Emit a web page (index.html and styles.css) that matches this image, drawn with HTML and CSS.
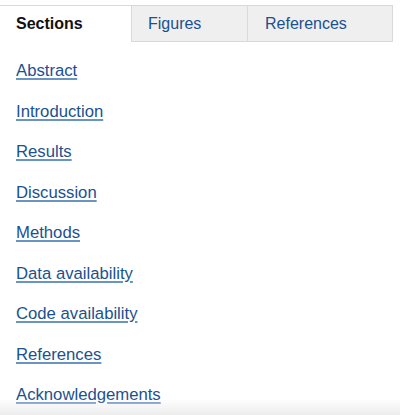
FILE: index.html
```html
<!DOCTYPE html>
<html>
<head>
<meta charset="utf-8">
<link rel="stylesheet" href="styles.css">
</head>
<body>
<div class="panel">
  <div class="tabs">
    <div class="tab active">Sections</div>
    <div class="tab">Figures</div>
    <div class="tab last">References</div>
  </div>
  <ul class="links">
    <li><a href="#">Abstract</a></li>
    <li><a href="#">Introduction</a></li>
    <li><a href="#">Results</a></li>
    <li><a href="#">Discussion</a></li>
    <li><a href="#">Methods</a></li>
    <li><a href="#">Data availability</a></li>
    <li><a href="#">Code availability</a></li>
    <li><a href="#">References</a></li>
    <li><a href="#">Acknowledgements</a></li>
  </ul>
</div>
<div class="fade"></div>
</body>
</html>
```
FILE: styles.css
```css
html, body {
  margin: 0;
  padding: 0;
  background: #fff;
  font-family: "Liberation Sans", Arial, sans-serif;
  font-size: 16px;
  overflow: hidden;
}
.panel {
  padding-top: 5px;
}
.tabs {
  display: flex;
  width: 393px;
}
.tab {
  box-sizing: border-box;
  height: 37px;
  line-height: 36px;
  padding: 0 0 0 16px;
  color: #1b5190;
  background: #efefef;
  border-top: 1px solid #d9d9d9;
  border-bottom: 1px solid #d9d9d9;
  border-left: 1px solid #d9d9d9;
  overflow: hidden;
}
.tab.active {
  width: 131px;
  background: #fff;
  color: #111;
  font-weight: bold;
  border-left: none;
  border-bottom: none;
}
.tab:nth-child(2) {
  width: 116px;
}
.tab.last {
  flex: 1;
  padding-left: 17px;
  border-right: 1px solid #d9d9d9;
}
.links {
  list-style: none;
  margin: 0;
  padding: 17px 0 0 16px;
  font-size: 16.7px;
}
.links li {
  line-height: 24px;
  margin-bottom: 16.5px;
}
.links a {
  color: #1b5190;
  text-decoration: underline;
  text-decoration-color: #6a94c2;
  text-decoration-thickness: 1.5px;
  text-underline-offset: 2px;
}
.fade {
  position: fixed;
  left: 0;
  right: 0;
  bottom: 0;
  height: 16px;
  background: linear-gradient(to bottom, rgba(255,255,255,0), #ececec);
  pointer-events: none;
}
```
